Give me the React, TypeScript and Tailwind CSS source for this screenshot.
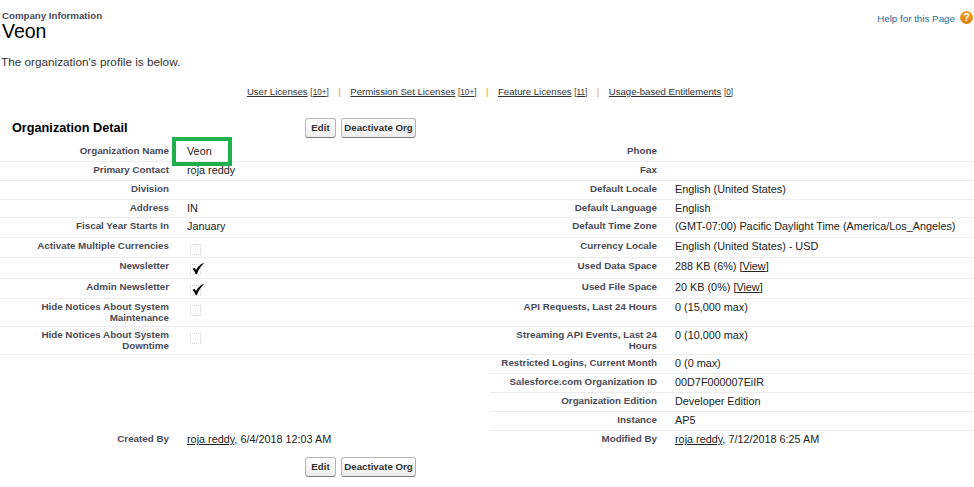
import React from 'react';

const font = "font-['Liberation_Sans',Arial,sans-serif]";

type Cell = { label?: string; value?: React.ReactNode; box?: 'empty' | 'checked' };

interface RowProps {
  h: string;
  left: Cell;
  right: Cell;
  noLeftLine?: boolean;
  noLine?: boolean;
}

const Box: React.FC<{ checked?: boolean }> = ({ checked }) => (
  <span className="relative mt-[4px] ml-[3px] block h-[11px] w-[11px] border border-dotted border-[#d4d4d4]">
    {checked && (
      <svg className="absolute left-[1px] top-[-2px]" width="12" height="11" viewBox="0 0 12 11">
        <path d="M0.5 6 L2.5 4.7 L4 7 C5.5 4 8 1.5 11.5 0 L11.8 0.6 C9 3 6.5 6.5 5 11 L3.6 11 C3 9 1.8 7.2 0.5 6 Z" fill="#000" />
      </svg>
    )}
  </span>
);

const Half: React.FC<{ cell: Cell; labelW: string; line: boolean; rightSide?: boolean }> = ({ cell, labelW, line, rightSide }) => (
  <div className={`flex min-w-0 ${rightSide ? 'w-[484px] pl-[3px]' : 'w-[490px]'} ${line ? 'border-b border-[#ececec]' : ''}`}>
    <div className={`${labelW} shrink-0 pt-[3px] text-right text-[9.8px] font-bold leading-[10.5px] text-[#4a4a56]`}>
      {cell.label}
    </div>
    <div className="pl-[18px] pt-[2px] text-[10.83px] leading-[13px] text-[#222]">
      {cell.box ? <Box checked={cell.box === 'checked'} /> : cell.value}
    </div>
  </div>
);

const Row: React.FC<RowProps> = ({ h, left, right, noLeftLine, noLine }) => (
  <div className={`flex ${h}`}>
    <Half cell={left} labelW="w-[169px]" line={!noLeftLine && !noLine} />
    <Half cell={right} labelW="w-[164px]" line={!noLine} rightSide />
  </div>
);

const Btn: React.FC<{ w: string; children: React.ReactNode }> = ({ w, children }) => (
  <button className={`${w} h-[20px] rounded-[3px] border border-[#b5b5b5] border-b-[#7f7f7f] bg-gradient-to-b from-white to-[#ededed] text-[9.7px] font-bold text-[#333]`}>
    {children}
  </button>
);

const Buttons = () => (
  <div className="flex gap-[5px]">
    <Btn w="w-[31px]">Edit</Btn>
    <Btn w="w-[75px]">Deactivate Org</Btn>
  </div>
);

const UserLink: React.FC<{ name: string; rest: React.ReactNode }> = ({ name, rest }) => (
  <>
    <span className="underline">{name}</span>
    {rest}
  </>
);

const License: React.FC<{ name: string; count: string }> = ({ name, count }) => (
  <span>
    <span className="underline">{name}</span>{' '}
    <span className="text-[8.2px] underline">[{count}]</span>
  </span>
);

const Sep = () => <span className="mx-[9.5px] text-[#e0a030]">|</span>;

export default function App() {
  return (
    <div className={`relative h-[487px] w-[974px] overflow-hidden bg-white ${font}`}>
      <div className="flex justify-between">
        <div className="pl-[2px] pt-[10px]">
          <div className="text-[9.7px] font-bold leading-[11px] text-[#4a4a56]">Company Information</div>
          <div className="text-[19.5px] leading-[21px] text-black">Veon</div>
        </div>
        <div className="flex items-start gap-[5px] pr-[1px] pt-[11px]">
          <span className="mt-[2px] text-[9.8px] leading-[12px] text-[#1f6f9e]">Help for this Page</span>
          <span className="flex h-[13px] w-[13px] items-center justify-center rounded-full bg-gradient-to-b from-[#f0a52a] to-[#d97f06] text-[10px] font-bold leading-none text-white">?</span>
        </div>
      </div>

      <div className="pl-[1px] pt-[13px] text-[11.75px] leading-[14px] text-[#333]">The organization's profile is below.</div>

      <div className="flex justify-center pl-[6px] pt-[17px] text-[9.6px] leading-[12px] text-[#333]">
        <License name="User Licenses" count="10+" />
        <Sep />
        <License name="Permission Set Licenses" count="10+" />
        <Sep />
        <License name="Feature Licenses" count="11" />
        <Sep />
        <License name="Usage-based Entitlements" count="0" />
      </div>

      <div className="box-content flex h-[20px] items-center pt-[19px]">
        <div className="w-[305px] pl-[12px] pt-[2px] text-[12.7px] font-bold text-black">Organization Detail</div>
        <Buttons />
      </div>

      <div className="pt-[5px]">
        <Row h="h-[19px]" left={{ label: 'Organization Name', value: 'Veon' }} right={{ label: 'Phone' }} />
        <Row h="h-[19px]" left={{ label: 'Primary Contact', value: 'roja reddy' }} right={{ label: 'Fax' }} />
        <Row h="h-[19px]" left={{ label: 'Division' }} right={{ label: 'Default Locale', value: 'English (United States)' }} />
        <Row h="h-[18px]" left={{ label: 'Address', value: 'IN' }} right={{ label: 'Default Language', value: 'English' }} />
        <Row h="h-[20px]" left={{ label: 'Fiscal Year Starts In', value: 'January' }} right={{ label: 'Default Time Zone', value: '(GMT-07:00) Pacific Daylight Time (America/Los_Angeles)' }} />
        <Row h="h-[20px]" left={{ label: 'Activate Multiple Currencies', box: 'empty' }} right={{ label: 'Currency Locale', value: 'English (United States) - USD' }} />
        <Row h="h-[21px]" left={{ label: 'Newsletter', box: 'checked' }} right={{ label: 'Used Data Space', value: <>288 KB (6%) [<span className="underline">View</span>]</> }} />
        <Row h="h-[20px]" left={{ label: 'Admin Newsletter', box: 'checked' }} right={{ label: 'Used File Space', value: <>20 KB (0%) [<span className="underline">View</span>]</> }} />
        <Row h="h-[28px]" left={{ label: 'Hide Notices About System Maintenance', box: 'empty' }} right={{ label: 'API Requests, Last 24 Hours', value: '0 (15,000 max)' }} />
        <Row h="h-[28px]" left={{ label: 'Hide Notices About System Downtime', box: 'empty' }} right={{ label: 'Streaming API Events, Last 24 Hours', value: '0 (10,000 max)' }} />
        <Row h="h-[19px]" noLeftLine left={{}} right={{ label: 'Restricted Logins, Current Month', value: '0 (0 max)' }} />
        <Row h="h-[19px]" noLeftLine left={{}} right={{ label: 'Salesforce.com Organization ID', value: '00D7F000007EiIR' }} />
        <Row h="h-[19px]" noLeftLine left={{}} right={{ label: 'Organization Edition', value: 'Developer Edition' }} />
        <Row h="h-[19px]" noLeftLine left={{}} right={{ label: 'Instance', value: 'AP5' }} />
        <Row
          h="h-[19px]"
          noLine
          left={{ label: 'Created By', value: <UserLink name="roja reddy" rest=", 6/4/2018 12:03 AM" /> }}
          right={{ label: 'Modified By', value: <UserLink name="roja reddy" rest=", 7/12/2018 6:25 AM" /> }}
        />
      </div>

      <div className="flex pl-[305px] pt-[7px]">
        <Buttons />
      </div>

      {/* annotation from the screenshot */}
      <div className="absolute left-[172px] top-[137px] h-[29px] w-[60px] border-[4px] border-[#1fb14f]" />
    </div>
  );
}
